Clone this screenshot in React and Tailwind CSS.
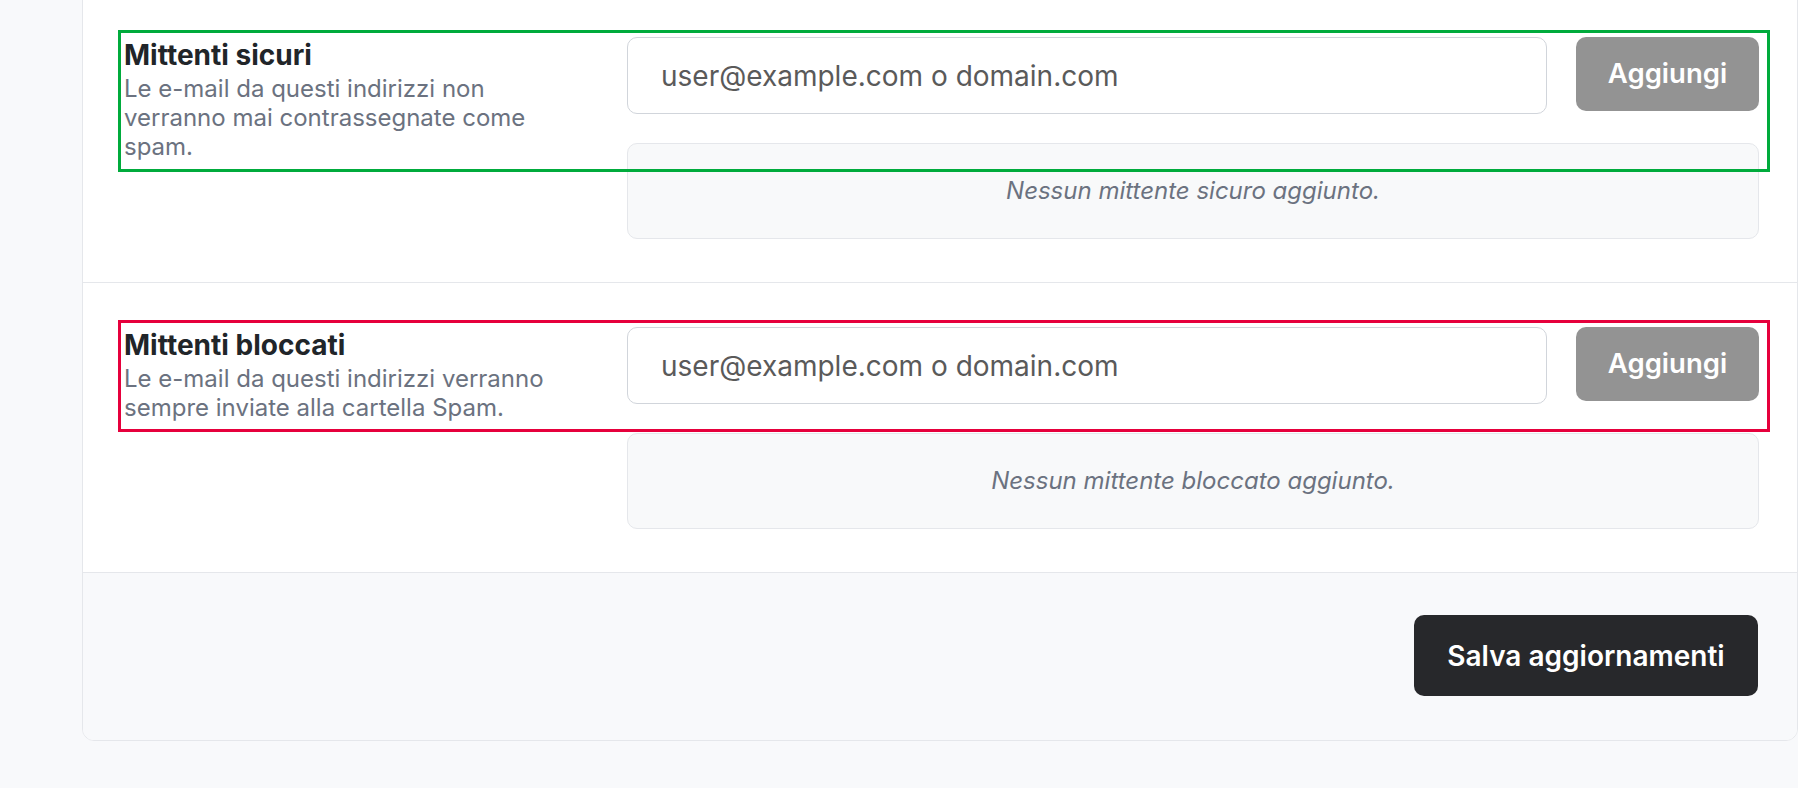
import React from "react";

const sections = [
  {
    id: "safe",
    title: "Mittenti sicuri",
    description:
      "Le e-mail da questi indirizzi non verranno mai contrassegnate come spam.",
    empty: "Nessun mittente sicuro aggiunto.",
    ring: "border-[#00ab3c] h-[142px]",
  },
  {
    id: "blocked",
    title: "Mittenti bloccati",
    description:
      "Le e-mail da questi indirizzi verranno sempre inviate alla cartella Spam.",
    empty: "Nessun mittente bloccato aggiunto.",
    ring: "border-[#e6003c] h-[112px]",
  },
];

function SenderSection({ title, description, empty, ring }) {
  return (
    <section className="border-b-[1.5px] border-[#e5e7eb] pl-[41px] pr-[38px] pt-[44px] pb-[43px]">
      <div className="relative grid grid-cols-[503px_1fr] gap-y-[29px]">
        {/* highlight frame around the label and the entry row */}
        <div
          className={`pointer-events-none absolute -top-[7px] -left-[6px] -right-[11px] border-[3px] ${ring}`}
        />
        <div className="row-span-2 pt-[2px]">
          <h3 className="text-[28px] leading-[33px] font-bold text-[#212529]">
            {title}
          </h3>
          <p className="mt-[3px] w-[440px] text-[24px] leading-[28.8px] text-[#6b7280]">
            {description}
          </p>
        </div>
        <div className="flex gap-[29px]">
          <input
            type="text"
            placeholder="user@example.com o domain.com"
            className="h-[77px] flex-1 rounded-[10px] border-[1.5px] border-[#d1d5db] bg-white px-[33px] text-[28px] text-[#212529] outline-none placeholder:text-[#5a5a5a]"
          />
          <button
            type="button"
            className="h-[74px] w-[183px] rounded-[10px] bg-[#939393] text-[27.5px] font-semibold text-white"
          >
            Aggiungi
          </button>
        </div>
        <div className="col-start-2 flex h-[96px] items-center justify-center rounded-[10px] border-[1.5px] border-[#e5e7eb] bg-[#f8f9fa]">
          <span className="text-[24px] italic text-[#6b7280]">{empty}</span>
        </div>
      </div>
    </section>
  );
}

export default function App() {
  return (
    <div
      className="min-h-screen bg-[#f8f9fb] pl-[82px] pb-[48px]"
      style={{ fontFamily: "Inter, 'Noto Sans', sans-serif" }}
    >
      <div className="-mt-[8px] overflow-hidden rounded-b-[12px] border-[1.5px] border-[#e5e7eb] bg-white">
        {sections.map((s) => (
          <SenderSection key={s.id} {...s} />
        ))}
        <footer className="flex justify-end bg-[#f8f9fb] pr-[39px] pt-[42px] pb-[44px]">
          <button
            type="button"
            className="h-[81px] w-[344px] rounded-[10px] bg-[#27282b] text-[28px] font-semibold text-white"
          >
            Salva aggiornamenti
          </button>
        </footer>
      </div>
    </div>
  );
}
